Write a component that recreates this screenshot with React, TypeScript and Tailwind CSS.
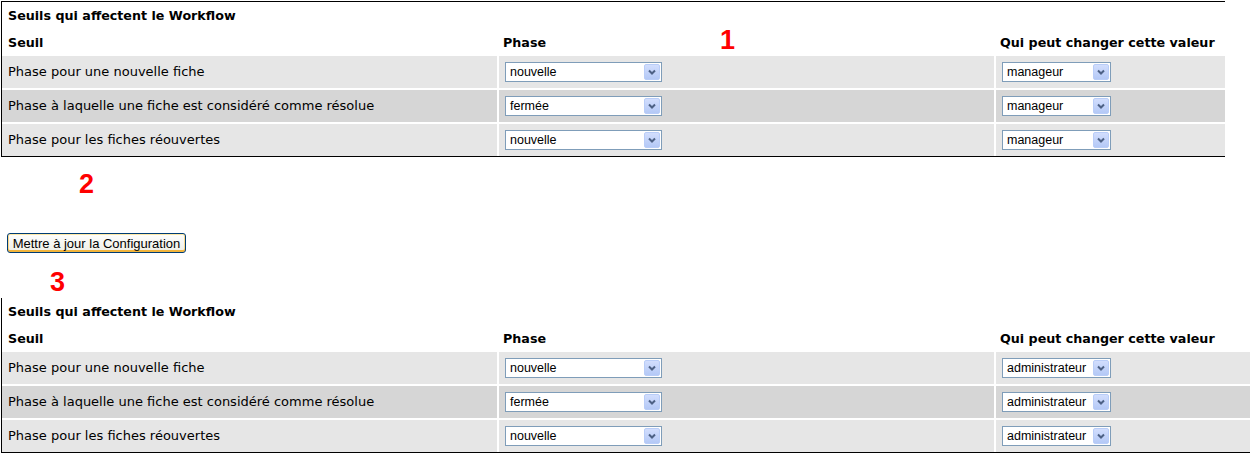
import React from 'react'

type Row = {
    seuil: string,
    phase: string,
    qui: string,
    shade: string
}

const rows1: Row[] = [
    { seuil: "Phase pour une nouvelle fiche", phase: "nouvelle", qui: "manageur", shade: "bg-[#e6e6e6]" },
    { seuil: "Phase à laquelle une fiche est considéré comme résolue", phase: "fermée", qui: "manageur", shade: "bg-[#d6d6d6]" },
    { seuil: "Phase pour les fiches réouvertes", phase: "nouvelle", qui: "manageur", shade: "bg-[#e6e6e6]" },
]

const rows2: Row[] = rows1.map((r) => ({ ...r, qui: "administrateur" }))

const FakeSelect = ({ value, className }: { value: string, className: string }) => (
    <div className={`relative h-[20px] border border-[#7f9db9] bg-white flex items-center ${className}`}>
        <span className="pl-[4px] text-[12.5px] leading-none text-black font-['Liberation_Sans',Arial,sans-serif]">{value}</span>
        <div className="absolute right-[1px] top-[1px] w-[16px] h-[16px] rounded-[2px] border border-[#b9cdf8] bg-gradient-to-b from-[#d2defd] to-[#b4c9f6] flex items-center justify-center">
            <svg width="8" height="6" viewBox="0 0 8 6">
                <path d="M1 1.5 L4 4.5 L7 1.5" fill="none" stroke="#4d6185" strokeWidth="2" />
            </svg>
        </div>
    </div>
)

type tableprops = {
    rows: Row[],
    wide: boolean,
    withTop: boolean,
    marker?: React.ReactNode
}

const SeuilsTable = ({ rows, wide, withTop, marker }: tableprops) => {
    const cols = wide ? "grid-cols-[495px_495px_254px]" : "grid-cols-[495px_495px_229px]"
    return (
        <div className={`relative ml-[1px] border-l border-b border-black ${withTop ? "border-t" : ""} font-['DejaVu_Sans',Verdana,sans-serif] text-[13px] text-black`}>
            {marker}
            <div className="h-[28px] flex items-center pl-[6px] font-bold text-[12.7px]">Seuils qui affectent le Workflow</div>
            <div className={`grid gap-x-[2px] ${cols} h-[26px] items-center font-bold text-[12.7px]`}>
                <div className="pl-[6px]">Seuil</div>
                <div className="pl-[4px]">Phase</div>
                <div className="pl-[4px]">Qui peut changer cette valeur</div>
            </div>
            <div className="flex flex-col gap-y-[2px]">
                {rows.map((r, i) => (
                    <div key={i} className={`grid gap-x-[2px] h-[32px] ${cols}`}>
                        <div className={`${r.shade} flex items-center pl-[6px]`}>{r.seuil}</div>
                        <div className={`${r.shade} flex items-center pl-[6px]`}>
                            <FakeSelect value={r.phase} className="w-[157px]" />
                        </div>
                        <div className={`${r.shade} flex items-center pl-[6px]`}>
                            <FakeSelect value={r.qui} className="w-[109px]" />
                        </div>
                    </div>
                ))}
            </div>
        </div>
    )
}

const RedNum = ({ n, className }: { n: string, className?: string }) => (
    <span className={`text-[27px] leading-[27px] font-bold text-[#ff0000] font-['Liberation_Sans',Arial,sans-serif] ${className ?? ""}`}>{n}</span>
)

export default function App() {
    return (
        <div className="w-[1254px] h-[457px] bg-white overflow-hidden">
            <div className="pt-[1px] w-[1225px]">
                <SeuilsTable
                    rows={rows1}
                    wide={false}
                    withTop={true}
                    marker={<RedNum n="1" className="absolute left-[718px] top-[25px]" />}
                />
            </div>
            <div className="h-[76px] pt-[14px] pl-[79px]">
                <RedNum n="2" className="block" />
            </div>
            <div className="pl-[7px]">
                <button className="h-[20px] w-[179px] rounded-[3px] border border-[#003c74] bg-gradient-to-b from-[#fefefd] to-[#efeee6] shadow-[inset_0_1px_0_#ffe9a6,inset_0_-2px_0_#f2b53c,inset_1px_0_0_#fbd88a,inset_-1px_0_0_#fbd88a] text-[13px] leading-none text-black font-['Liberation_Sans',Arial,sans-serif] flex items-center justify-center">
                    Mettre à jour la Configuration
                </button>
            </div>
            <div className="h-[45px] pt-[16px] pl-[50px]">
                <RedNum n="3" className="block" />
            </div>
            <div className="w-[1250px]">
                <SeuilsTable rows={rows2} wide={true} withTop={false} />
            </div>
        </div>
    )
}
